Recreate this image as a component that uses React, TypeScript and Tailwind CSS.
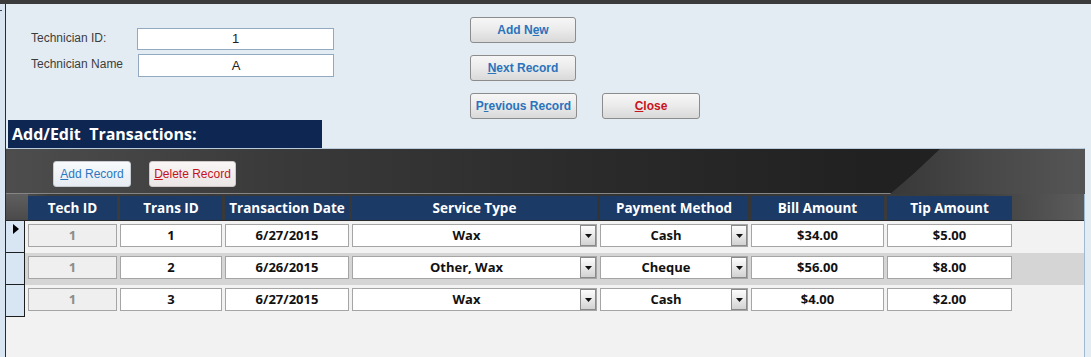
import React from "react";

const rows = [
  { tech: "1", trans: "1", date: "6/27/2015", service: "Wax", pay: "Cash", bill: "$34.00", tip: "$5.00", alt: false, current: true },
  { tech: "1", trans: "2", date: "6/26/2015", service: "Other, Wax", pay: "Cheque", bill: "$56.00", tip: "$8.00", alt: true, current: false },
  { tech: "1", trans: "3", date: "6/27/2015", service: "Wax", pay: "Cash", bill: "$4.00", tip: "$2.00", alt: false, current: false },
];

function TopButton({ children, w, red }: { children: React.ReactNode; w: string; red?: boolean }) {
  return (
    <div
      className={`${w} h-[26px] flex items-center justify-center rounded-[3px] border border-[#8c8c8c] bg-[linear-gradient(180deg,#f6f6f6_0%,#ececec_45%,#d9d9d9_100%)] text-[12px] font-bold ${
        red ? "text-[#c8141c]" : "text-[#2a73bd]"
      }`}
    >
      {children}
    </div>
  );
}

function DropBtn() {
  return (
    <div className="w-[16px] h-full shrink-0 border border-[#8a8a8a] bg-[linear-gradient(180deg,#fdfdfd_0%,#e9e9e9_50%,#d2d2d2_100%)] flex items-end justify-center pb-[7px]">
      <svg width="7" height="4" viewBox="0 0 7 4">
        <polygon points="0,0 7,0 3.5,4" fill="#111" />
      </svg>
    </div>
  );
}

function Cell({ w, children, gray, drop }: { w: string; children: React.ReactNode; gray?: boolean; drop?: boolean }) {
  return (
    <div
      className={`${w} h-[23px] shrink-0 border border-[#a5a5a5] flex items-stretch ${
        gray ? "bg-[#efefef] text-[#8c8c8c]" : "bg-white text-[#111]"
      }`}
    >
      <div className="flex-1 flex items-center justify-center text-[13px] font-bold leading-none">{children}</div>
      {drop && (
        <div className="py-0 h-full">
          <DropBtn />
        </div>
      )}
    </div>
  );
}

const headers: [string, string][] = [
  ["Tech ID", "w-[89px]"],
  ["Trans ID", "w-[102px]"],
  ["Transaction Date", "w-[124px]"],
  ["Service Type", "w-[245px]"],
  ["Payment Method", "w-[148px]"],
  ["Bill Amount", "w-[133px]"],
  ["Tip Amount", "w-[125px]"],
];

export default function App() {
  return (
    <div className="w-[1091px] h-[357px] overflow-hidden bg-[#e4ecf3] flex flex-col font-['Liberation_Sans',Arial,sans-serif]">
      <div className="h-[4px] shrink-0 bg-[#3b3b3b]" />
      <div className="flex flex-1 min-h-0">
        {/* left strip */}
        <div className="w-[6px] shrink-0 bg-[#d9e5f1] border-r border-[#2b2b2b] relative">
          <div className="absolute left-0 top-[6px] w-[2px] h-[1px] bg-[#444]" />
        </div>

        <div className="flex-1 flex flex-col min-w-0">
          {/* top section */}
          <div className="h-[116px] shrink-0 flex">
            <div className="pl-[25px] pt-[24px] flex flex-col gap-[4px]">
              <div className="flex items-center h-[22px]">
                <div className="w-[106px] text-[12px] text-[#3c3c3c] -mt-[3px]">Technician ID:</div>
                <div className="w-[197px] h-[22px] border border-[#93a9c1] bg-white flex items-center justify-center text-[13px] text-[#222]">
                  1
                </div>
              </div>
              <div className="flex items-center h-[23px]">
                <div className="w-[107px] text-[12px] text-[#3c3c3c] -mt-[3px]">Technician Name</div>
                <div className="w-[196px] h-[23px] border border-[#93a9c1] bg-white flex items-center justify-center text-[13px] text-[#222]">
                  A
                </div>
              </div>
            </div>
            <div className="ml-[136px] pt-[13px] flex flex-col gap-[12px]">
              <TopButton w="w-[106px]">
                <span>
                  Add N<span className="underline">e</span>w
                </span>
              </TopButton>
              <TopButton w="w-[106px]">
                <span>
                  <span className="underline">N</span>ext Record
                </span>
              </TopButton>
              <div className="flex gap-[25px]">
                <TopButton w="w-[107px]">
                  <span>
                    P<span className="underline">r</span>evious Record
                  </span>
                </TopButton>
                <TopButton w="w-[98px]" red>
                  <span>
                    <span className="underline">C</span>lose
                  </span>
                </TopButton>
              </div>
            </div>
          </div>

          {/* title */}
          <div className="ml-[2px] w-[314px] h-[28px] shrink-0 bg-[#0e2752] flex items-center pl-[4px]">
            <span className="text-white text-[16px] font-bold whitespace-pre font-['Open_Sans',sans-serif]">Add/Edit  Transactions:</span>
          </div>

          {/* subform */}
          <div className="w-[1079px] flex-1 min-h-0 flex flex-col border-r border-[#9fb9d3] bg-[#f2f2f2]">
            {/* dark band */}
            <div className="relative h-[45px] shrink-0 border-t border-[#b9cadb] bg-[linear-gradient(90deg,#4d4d4d_0%,#3a3a3a_25%,#2a2a2a_55%,#212121_80%)]">
              <svg className="absolute inset-0" width="1079" height="45" viewBox="0 0 1079 45" preserveAspectRatio="none">
                <defs>
                  <linearGradient id="lg" x1="0" y1="0" x2="1" y2="0">
                    <stop offset="0" stopColor="#383838" />
                    <stop offset="0.5" stopColor="#484848" />
                    <stop offset="1" stopColor="#555555" />
                  </linearGradient>
                </defs>
                <path d="M934,0 C915,18 900,32 884,45 L1079,45 L1079,0 Z" fill="url(#lg)" />
              </svg>
              <div className="relative flex gap-[18px] pl-[47px] pt-[12px]">
                <div className="w-[78px] h-[26px] rounded-[3px] border border-[#c7ccd2] bg-[linear-gradient(180deg,#f8fafc_0%,#e6ecf2_100%)] flex items-center justify-center text-[12px] text-[#2b78c2]">
                  <span>
                    <span className="underline">A</span>dd Record
                  </span>
                </div>
                <div className="w-[87px] h-[26px] rounded-[3px] border border-[#d0c8c8] bg-[linear-gradient(180deg,#faf6f6_0%,#ebe6e6_100%)] flex items-center justify-center text-[12px] text-[#c4141c]">
                  <span>
                    <span className="underline">D</span>elete Record
                  </span>
                </div>
              </div>
            </div>

            {/* header row */}
            <div className="h-[28px] shrink-0 border-t border-[#858585] border-b border-b-[#2a2a2a] bg-[linear-gradient(90deg,#5c5c5c_0%,#3c3c3c_4%,#333_60%,#3e3e3e_90%,#5c5c5c_100%)] flex pt-[2px] font-['Open_Sans',sans-serif]">
              <div className="w-[22px] shrink-0 bg-[linear-gradient(180deg,#5f5f5f,#4a4a4a)] -mt-[2px]" />
              <div className="flex gap-[3px]">
                {headers.map(([h, w]) => (
                  <div key={h} className={`${w} h-[24px] bg-[#1b3a66] flex items-center justify-center text-white text-[13.5px] font-bold`}>
                    {h}
                  </div>
                ))}
              </div>
            </div>

            {/* rows */}
            <div className="flex flex-col font-['Open_Sans',sans-serif]">
              {rows.map((r, i) => (
                <div key={i} className={`h-[32px] flex ${r.alt ? "bg-[#d5d5d5]" : "bg-[#f2f2f2]"}`}>
                  <div className="w-[19px] shrink-0 bg-[#d8e5f2] border-r border-b border-[#1e1e1e] relative">
                    {r.current && (
                      <svg className="absolute left-[7px] top-[3px]" width="6" height="10" viewBox="0 0 6 10">
                        <polygon points="0,0 6,5 0,10" fill="#000" />
                      </svg>
                    )}
                  </div>
                  <div className="pl-[3px] pt-[3px] flex gap-[3px]">
                    <Cell w="w-[89px]" gray>
                      {r.tech}
                    </Cell>
                    <Cell w="w-[102px]">{r.trans}</Cell>
                    <Cell w="w-[124px]">{r.date}</Cell>
                    <Cell w="w-[245px]" drop>
                      {r.service}
                    </Cell>
                    <Cell w="w-[148px]" drop>
                      {r.pay}
                    </Cell>
                    <Cell w="w-[133px]">{r.bill}</Cell>
                    <Cell w="w-[125px]">{r.tip}</Cell>
                  </div>
                </div>
              ))}
            </div>
          </div>
        </div>
      </div>
    </div>
  );
}
